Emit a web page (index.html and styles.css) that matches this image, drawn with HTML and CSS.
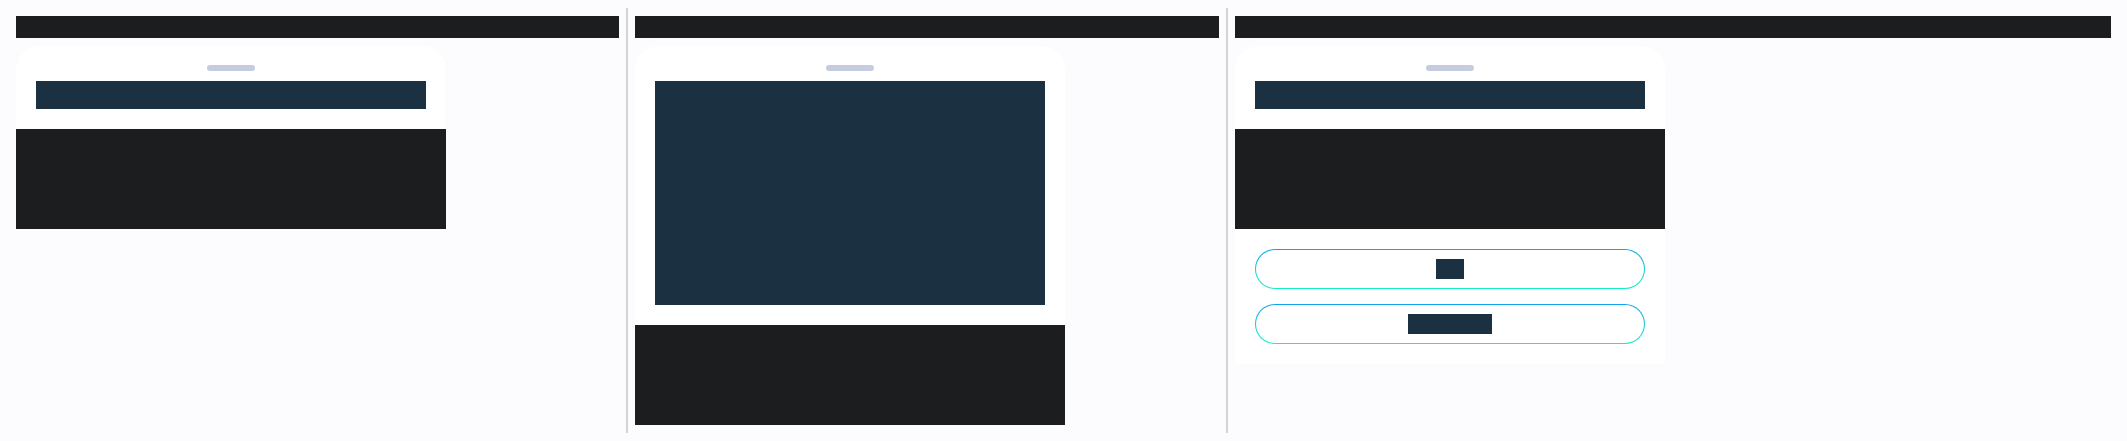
FILE: index.html
```html
<!DOCTYPE html>
<html lang="en">
<head>
<meta charset="utf-8">
<title>Sheets</title>
<link rel="stylesheet" href="styles.css">
</head>
<body>
<div class="page">
  <section class="col col-1">
    <div class="topbar"></div>
    <div class="sheet">
      <div class="sheet-head">
        <div class="handle"></div>
        <div class="block block-short"></div>
      </div>
      <div class="dark"></div>
    </div>
  </section>
  <section class="col col-2">
    <div class="topbar"></div>
    <div class="sheet">
      <div class="sheet-head">
        <div class="handle"></div>
        <div class="block block-tall"></div>
      </div>
      <div class="dark"></div>
    </div>
  </section>
  <section class="col col-3">
    <div class="topbar"></div>
    <div class="sheet">
      <div class="sheet-head">
        <div class="handle"></div>
        <div class="block block-short"></div>
      </div>
      <div class="dark"></div>
      <div class="actions">
        <button class="btn"><span class="label label-s"></span></button>
        <button class="btn"><span class="label label-l"></span></button>
      </div>
    </div>
  </section>
</div>
</body>
</html>
```

FILE: styles.css
```css
* { box-sizing: border-box; }
html, body { margin: 0; padding: 0; }
body {
  background: #fcfcfe;
  font-family: "Liberation Sans", Arial, sans-serif;
}
.page {
  display: flex;
  margin: 8px;
  height: 425px;
}
.col {
  padding: 8px 7px;
  display: flex;
  flex-direction: column;
  gap: 8px;
}
.col-1 { width: 618px; padding-left: 8px; }
.col-2 { width: 600px; border-left: 2px solid #d4d4d8; }
.col-3 { width: 893px; border-left: 2px solid #d4d4d8; padding-right: 8px; }
.topbar {
  height: 22px;
  background: #1c1d1f;
}
.sheet {
  width: 430px;
  background: #ffffff;
  border-radius: 24px 24px 0 0;
  display: flex;
  flex-direction: column;
}
.sheet-head {
  padding: 19px 20px 20px;
  display: flex;
  flex-direction: column;
  align-items: center;
  gap: 10px;
}
.handle {
  width: 48px;
  height: 6px;
  border-radius: 3px;
  background: #c5cce0;
}
.block {
  width: 390px;
  background: #1b3142;
}
.block-short { height: 28px; }
.block-tall { height: 224px; }
.dark {
  height: 100px;
  background: #1c1d1f;
}
.actions {
  padding: 20px;
  display: flex;
  flex-direction: column;
  gap: 15px;
}
.btn {
  height: 40px;
  width: 100%;
  padding: 0;
  border: 1px solid transparent;
  border-radius: 20px;
  background:
    linear-gradient(#ffffff, #ffffff) padding-box,
    linear-gradient(to bottom, #0ba5ec, #16f0c4) border-box;
  display: flex;
  align-items: center;
  justify-content: center;
}
.label {
  display: block;
  height: 20px;
  background: #1b3142;
}
.label-s { width: 28px; }
.label-l { width: 84px; }
```
